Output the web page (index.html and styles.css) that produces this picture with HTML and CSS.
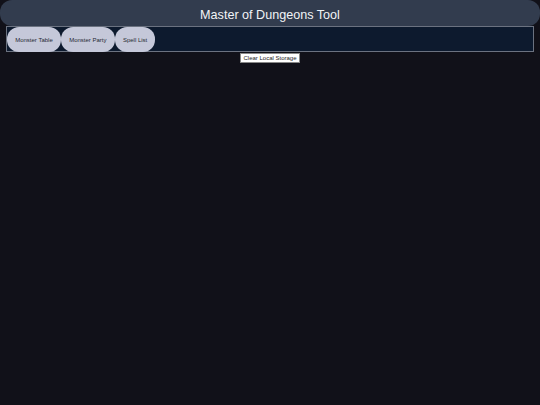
FILE: index.html
```html
<!DOCTYPE html>
<html>
<head>
<meta charset="utf-8">
<link rel="stylesheet" href="styles.css">
</head>
<body>
<header class="top">
  <h1 class="title">Master of Dungeons Tool</h1>
</header>
<nav class="tabs">
  <button class="tab">Monster Table</button>
  <button class="tab">Monster Party</button>
  <button class="tab">Spell List</button>
</nav>
<div class="actions">
  <button class="clear">Clear Local Storage</button>
</div>
</body>
</html>
```
FILE: styles.css
```css
html, body {
  margin: 0;
  padding: 0;
  background: #111119;
  font-family: "Liberation Sans", Arial, sans-serif;
}
.top {
  background: #323c4e;
  height: 26px;
  border-radius: 12px;
  display: flex;
  align-items: center;
  justify-content: center;
}
.title {
  margin: 0;
  color: #f1f3f6;
  font-size: 12.6px;
  font-weight: normal;
  line-height: 26px;
  padding-top: 4px;
}
.tabs {
  margin: 0 6px;
  background: #0d1a2e;
  border: 1px solid #6b7280;
  display: flex;
  height: 24px;
  padding: 0;
  box-sizing: content-box;
}
.tab {
  background: #c5c8d9;
  color: #252833;
  border: none;
  border-radius: 12px;
  font-family: "Liberation Sans", Arial, sans-serif;
  font-size: 6px;
  padding: 0 8.2px;
  height: 25px;
  margin: 0;
}
.actions {
  display: flex;
  justify-content: center;
  padding-top: 1px;
}
.clear {
  background: #ffffff;
  color: #222;
  border: 1px solid #888;
  border-radius: 0;
  font-family: "Liberation Sans", Arial, sans-serif;
  font-size: 6px;
  padding: 0 2px;
  height: 10px;
  margin: 0;
}
```
